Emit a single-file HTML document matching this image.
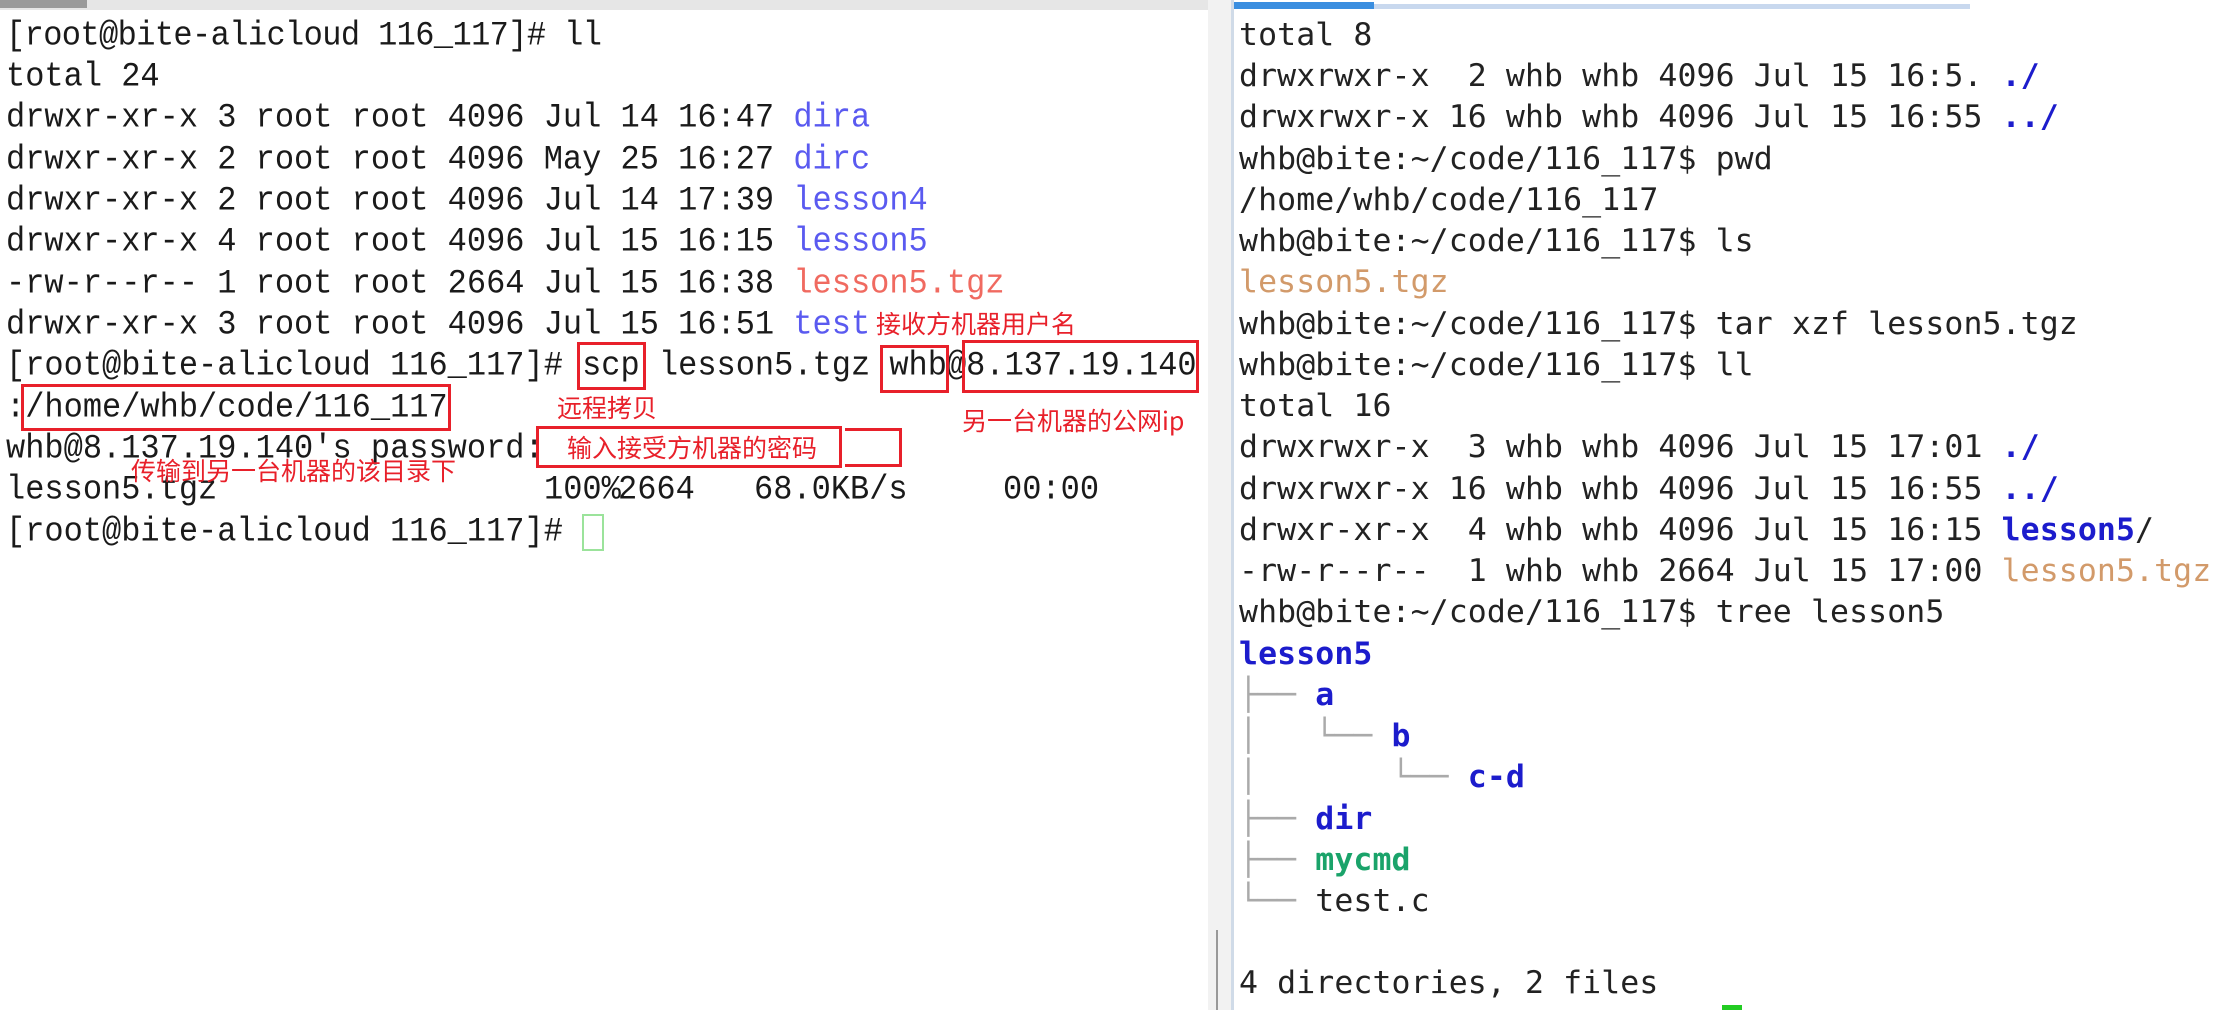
<!DOCTYPE html>
<html><head><meta charset="utf-8"><style>
body{margin:0;width:2238px;height:1010px;background:#fff;position:relative;overflow:hidden}
.l{position:absolute;left:6px;font-family:"Liberation Mono",monospace;font-size:32px;color:#1a1a1a;white-space:pre;line-height:41.3px;transform:scaleY(1.08);transform-origin:0 50%}
.r{position:absolute;left:1239px;font-family:"DejaVu Sans Mono","Liberation Mono",monospace;font-size:31.5px;color:#222;white-space:pre;line-height:41.2px;letter-spacing:0.1px}
.b1{color:#5a5af0}.o1{color:#f06a60}
.b2{color:#1c1ccc;font-weight:bold}.t2{color:#d29a6a}.g2{color:#1aa36a;font-weight:bold}.gr{color:#aaa}
.box{position:absolute;border:3px solid #e8202a}
.ann{position:absolute;font-family:"Noto Sans CJK SC",sans-serif;font-size:25px;color:#e8202a;line-height:30px;white-space:nowrap}
</style></head><body>
<div style="position:absolute;left:0;top:0;width:1210px;height:10px;background:#e6e6e6"></div>
<div style="position:absolute;left:0;top:0;width:87px;height:8px;background:#9a9a9a"></div>
<div style="position:absolute;left:1208px;top:0;width:24px;height:1010px;background:#f2f2f2"></div>
<div style="position:absolute;left:1216px;top:930px;width:2px;height:80px;background:#999"></div>
<div style="position:absolute;left:1231px;top:0;width:3px;height:1010px;background:#d0dbe8"></div>
<div style="position:absolute;left:1234px;top:4px;width:736px;height:5px;background:#c8d8ee"></div>
<div style="position:absolute;left:1234px;top:2px;width:140px;height:7px;background:#3a8ee0"></div>

<div class="l" style="top:15px;letter-spacing:-0.6px">[root@bite-alicloud 116_117]# ll</div>
<div class="l" style="top:56px">total 24</div>
<div class="l" style="top:97px">drwxr-xr-x 3 root root 4096 Jul 14 16:47 <span class="b1">dira</span></div>
<div class="l" style="top:139px">drwxr-xr-x 2 root root 4096 May 25 16:27 <span class="b1">dirc</span></div>
<div class="l" style="top:180px">drwxr-xr-x 2 root root 4096 Jul 14 17:39 <span class="b1">lesson4</span></div>
<div class="l" style="top:221px">drwxr-xr-x 4 root root 4096 Jul 15 16:15 <span class="b1">lesson5</span></div>
<div class="l" style="top:263px">-rw-r--r-- 1 root root 2664 Jul 15 16:38 <span class="o1">lesson5.tgz</span></div>
<div class="l" style="top:304px">drwxr-xr-x 3 root root 4096 Jul 15 16:51 <span class="b1">test</span></div>
<div class="l" style="top:345px">[root@bite-alicloud 116_117]# scp lesson5.tgz whb@8.137.19.140</div>
<div class="l" style="top:387px">:/home/whb/code/116_117</div>
<div class="l" style="top:428px">whb@8.137.19.140's password:</div>
<div class="l" style="top:469px">lesson5.tgz</div>
<div class="l" style="top:469px;left:544px">100%</div>
<div class="l" style="top:469px;left:618px">2664</div>
<div class="l" style="top:469px;left:754px">68.0KB/s</div>
<div class="l" style="top:469px;left:1003px">00:00</div>
<div class="l" style="top:511px">[root@bite-alicloud 116_117]#</div>
<div style="position:absolute;left:582px;top:514px;width:18px;height:33px;border:2px solid #9be39b"></div>

<div class="box" style="left:577px;top:342px;width:63px;height:42px"></div>
<div class="box" style="left:880px;top:345px;width:63px;height:42px"></div>
<div class="box" style="left:962px;top:340px;width:231px;height:47px"></div>
<div class="box" style="left:21px;top:384px;width:424px;height:41px"></div>
<div style="position:absolute;left:539px;top:428px;width:297px;height:32px;background:#fff"></div>
<div class="box" style="left:536px;top:426px;width:300px;height:36px"></div>
<div class="box" style="left:845px;top:428px;width:54px;height:33px;border-left:none"></div>
<div class="ann" style="left:876px;top:308px;background:#fff">接收方机器用户名</div>
<div class="ann" style="left:557px;top:392px">远程拷贝</div>
<div class="ann" style="left:962px;top:405px">另一台机器的公网ip</div>
<div class="ann" style="left:567px;top:432px">输入接受方机器的密码</div>
<div class="ann" style="left:131px;top:455px">传输到另一台机器的该目录下</div>

<div class="r" style="top:15px">total 8</div>
<div class="r" style="top:56px">drwxrwxr-x  2 whb whb 4096 Jul 15 16:5. <span class="b2">./</span></div>
<div class="r" style="top:97px">drwxrwxr-x 16 whb whb 4096 Jul 15 16:55 <span class="b2">../</span></div>
<div class="r" style="top:139px">whb@bite:~/code/116_117$ pwd</div>
<div class="r" style="top:180px">/home/whb/code/116_117</div>
<div class="r" style="top:221px">whb@bite:~/code/116_117$ ls</div>
<div class="r" style="top:262px"><span class="t2">lesson5.tgz</span></div>
<div class="r" style="top:304px">whb@bite:~/code/116_117$ tar xzf lesson5.tgz</div>
<div class="r" style="top:345px">whb@bite:~/code/116_117$ ll</div>
<div class="r" style="top:386px">total 16</div>
<div class="r" style="top:427px">drwxrwxr-x  3 whb whb 4096 Jul 15 17:01 <span class="b2">./</span></div>
<div class="r" style="top:469px">drwxrwxr-x 16 whb whb 4096 Jul 15 16:55 <span class="b2">../</span></div>
<div class="r" style="top:510px">drwxr-xr-x  4 whb whb 4096 Jul 15 16:15 <span class="b2">lesson5</span>/</div>
<div class="r" style="top:551px">-rw-r--r--  1 whb whb 2664 Jul 15 17:00 <span class="t2">lesson5.tgz</span></div>
<div class="r" style="top:592px">whb@bite:~/code/116_117$ tree lesson5</div>
<div class="r" style="top:634px"><span class="b2">lesson5</span></div>
<div class="r" style="top:675px"><span class="gr">├── </span><span class="b2">a</span></div>
<div class="r" style="top:716px"><span class="gr">│   └── </span><span class="b2">b</span></div>
<div class="r" style="top:757px"><span class="gr">│       └── </span><span class="b2">c-d</span></div>
<div class="r" style="top:799px"><span class="gr">├── </span><span class="b2">dir</span></div>
<div class="r" style="top:840px"><span class="gr">├── </span><span class="g2">mycmd</span></div>
<div class="r" style="top:881px"><span class="gr">└── </span>test.c</div>
<div class="r" style="top:963px">4 directories, 2 files</div>
<div style="position:absolute;left:1722px;top:1005px;width:20px;height:5px;background:#2c2"></div>
</body></html>
